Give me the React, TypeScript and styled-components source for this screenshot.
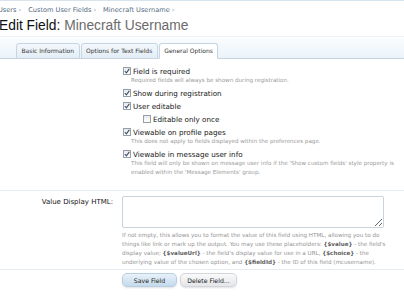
import React from "react";
import styled, { createGlobalStyle } from "styled-components";

const GlobalStyle = createGlobalStyle`
	html, body {
		margin: 0;
		padding: 0;
		background: #ffffff;
		overflow: hidden;
	}
	body {
		font-family: "DejaVu Sans", Tahoma, sans-serif;
		color: #141414;
	}
`;

interface OptionProps {
	label: string;
	checked?: boolean;
	hint?: string[];
	nested?: boolean;
}

const Option: React.FC<OptionProps> = ({ label, checked = true, hint, nested }) => (
	<OptionRow $nested={nested}>
		<OptionLine>
			<CheckBox>
				{checked && (
					<svg width="6" height="6" viewBox="0 0 6 6">
						<path d="M0.8 3.2 L2.4 4.8 L5.3 0.9" fill="none" stroke="#3d4f63" strokeWidth="1.1" />
					</svg>
				)}
			</CheckBox>
			<OptionLabel>{label}</OptionLabel>
		</OptionLine>
		{hint && (
			<Hint>
				{hint.map((line, i) => (
					<div key={i}>{line}</div>
				))}
			</Hint>
		)}
	</OptionRow>
);

export default function App() {
	return (
		<>
			<GlobalStyle />
			<Page>
				<Breadcrumb>
					<Crumb>Users</Crumb>
					<Crumb>Custom User Fields</Crumb>
					<Crumb>Minecraft Username</Crumb>
				</Breadcrumb>
				<Title>
					Edit Field: <TitleName>Minecraft Username</TitleName>
				</Title>
				<TabBar>
					<Tab>Basic Information</Tab>
					<Tab>Options for Text Fields</Tab>
					<Tab $active>General Options</Tab>
				</TabBar>

				<Section $top={7} $bottom={10}>
					<FormRow>
						<Label />
						<Controls>
							<Option
								label="Field is required"
								hint={["Required fields will always be shown during registration."]}
							/>
							<Option label="Show during registration" />
							<Option label="User editable" />
							<Option label="Editable only once" checked={false} nested />
							<Option
								label="Viewable on profile pages"
								hint={["This does not apply to fields displayed within the preferences page."]}
							/>
							<Option
								label="Viewable in message user info"
								hint={[
									"This field will only be shown on message user info if the 'Show custom fields' style property is",
									"enabled within the 'Message Elements' group.",
								]}
							/>
						</Controls>
					</FormRow>
				</Section>

				<Section $top={5} $bottom={2}>
					<FormRow>
						<Label>Value Display HTML:</Label>
						<Controls>
							<TextArea />
							<Explain>
								<div>
									If not empty, this allows you to format the value of this field using HTML, allowing you to do
								</div>
								<div>
									things like link or mark up the output. You may use these placeholders: <b>{"{$value}"}</b> - the field's
								</div>
								<div>
									display value; <b>{"{$valueUrl}"}</b> - the field's display value for use in a URL, <b>{"{$choice}"}</b> - the
								</div>
								<div>
									underlying value of the chosen option, and <b>{"{$fieldId}"}</b> - the ID of this field (mcusername).
								</div>
							</Explain>
						</Controls>
					</FormRow>
				</Section>

				<ButtonRow>
					<Button $primary>Save Field</Button>
					<Button>Delete Field...</Button>
				</ButtonRow>
			</Page>
		</>
	);
}

const Page = styled.div`
	width: 404px;
	height: 300px;
	border-top: 1px solid #d6e4ef;
	box-sizing: border-box;
`;

const Breadcrumb = styled.div`
	display: flex;
	gap: 7px;
	margin-left: -2px;
	padding-top: 4px;
	height: 10px;
	font-size: 6.6px;
	line-height: 10px;
	color: #4f6a80;
`;

const Crumb = styled.span`
	&::after {
		content: " \u203a";
		color: #8aa0b2;
	}
`;

const Title = styled.h1`
	margin: 0 0 0 -1px;
	height: 21px;
	font-family: "Liberation Sans", Arial, sans-serif;
	font-size: 13.8px;
	line-height: 21px;
	font-weight: normal;
	color: #101010;
`;

const TitleName = styled.span`
	color: #6b6b6b;
`;

const TabBar = styled.div`
	display: flex;
	align-items: flex-end;
	height: 21px;
	padding-left: 16px;
	border-top: 1px solid #eef3f8;
	border-bottom: 1px solid #c5d6e2;
	background: linear-gradient(to bottom, #fbfdff, #ebf3fa);
`;

const Tab = styled.div<{ $active?: boolean }>`
	height: 14px;
	line-height: 14px;
	padding: 0 4.5px;
	margin-right: 1px;
	margin-bottom: -1px;
	font-size: 6px;
	color: #333;
	border: 1px solid #c5d6e2;
	border-bottom: ${(p) => (p.$active ? "1px solid #ffffff" : "1px solid #c5d6e2")};
	border-radius: 3px 3px 0 0;
	background: ${(p) => (p.$active ? "#ffffff" : "linear-gradient(to bottom, #f4f8fc, #e3edf6)")};
`;

const Section = styled.div<{ $top: number; $bottom: number }>`
	border-bottom: 1px solid #e4ecf2;
	padding: ${(p) => `${p.$top}px 0 ${p.$bottom}px`};
`;

const FormRow = styled.div`
	display: flex;
	align-items: flex-start;
`;

const Label = styled.div`
	width: 122px;
	flex: none;
	padding: 1px 9px 0 0;
	box-sizing: border-box;
	text-align: right;
	font-size: 7px;
	line-height: 10px;
	color: #141414;
`;

const Controls = styled.div`
	flex: 1;
	min-width: 0;
`;

const OptionRow = styled.div<{ $nested?: boolean }>`
	margin-left: ${(p) => (p.$nested ? "20px" : "0")};
	margin-bottom: 3px;
`;

const OptionLine = styled.div`
	display: flex;
	align-items: center;
	gap: 2px;
	height: 10px;
	margin-left: 1px;
`;

const CheckBox = styled.span`
	display: inline-flex;
	align-items: center;
	justify-content: center;
	width: 6px;
	height: 6px;
	border: 1px solid #959fa9;
	background: linear-gradient(to bottom, #e6eaee, #ffffff);
`;

const OptionLabel = styled.span`
	font-size: 7.2px;
	color: #141414;
`;

const Hint = styled.div`
	margin-left: 9px;
	font-size: 5.6px;
	line-height: 9px;
	color: #9a9a9a;
	white-space: nowrap;
`;

const TextArea = styled.textarea`
	display: block;
	width: 262px;
	height: 32px;
	margin: 0;
	padding: 0;
	box-sizing: border-box;
	border: 1px solid #c9d3db;
	border-radius: 2px;
	background: #ffffff;
	resize: both;
`;

const Explain = styled.div`
	margin-top: 3px;
	font-size: 5.6px;
	line-height: 9px;
	color: #949494;
	white-space: nowrap;

	b {
		color: #5f5f5f;
	}
`;

const ButtonRow = styled.div`
	display: flex;
	gap: 3px;
	padding: 3px 0 0 122px;
`;

const Button = styled.button<{ $primary?: boolean }>`
	height: 14px;
	width: ${(p) => (p.$primary ? "55px" : "57px")};
	padding: 0;
	font-family: inherit;
	font-size: 6.2px;
	color: #222;
	border: 1px solid ${(p) => (p.$primary ? "#b7cfe2" : "#d2d6da")};
	border-radius: 5px;
	background: ${(p) =>
		p.$primary
			? "linear-gradient(to bottom, #e8f2fa, #c4daec)"
			: "linear-gradient(to bottom, #fafafa, #e4e6e9)"};
	box-shadow: 0 1px 2px rgba(0, 0, 0, 0.12);
`;
